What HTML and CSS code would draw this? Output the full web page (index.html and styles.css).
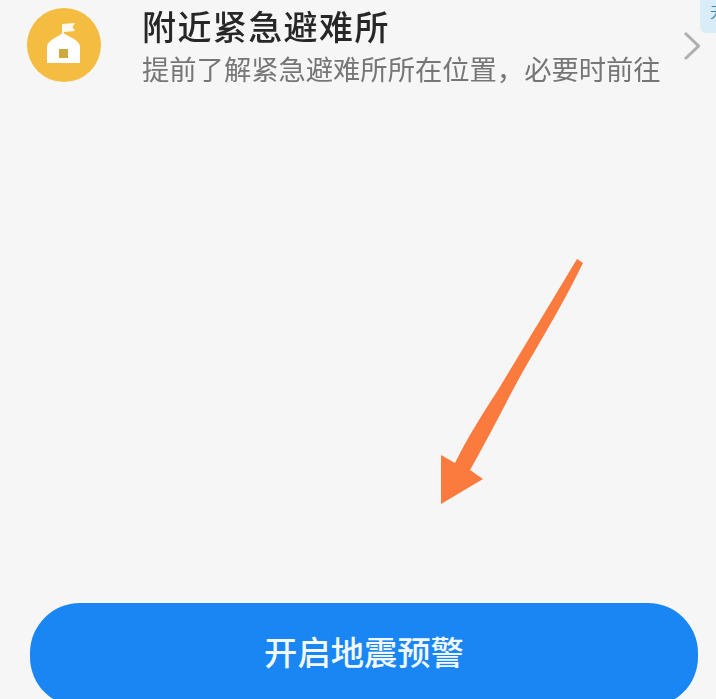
FILE: index.html
```html
<!DOCTYPE html>
<html lang="zh-CN">
<head>
<meta charset="utf-8">
<title>地震预警</title>
<link rel="stylesheet" href="styles.css">
</head>
<body>
<main class="screen">
  <section class="row">
    <svg class="badge" viewBox="0 0 74 74" aria-hidden="true">
      <circle cx="37" cy="37" r="37" fill="#f4bc41"/>
      <path d="M36 26L36 16" stroke="#fff" stroke-width="1.800" fill="none"/>
      <path d="M36 16L48 15L45.500 19L48 23L37 24Z" fill="#fff" opacity=".92"/>
      <path d="M20 55V39Q20.500 34 26 31L36 25L47 31Q52.500 34 53 39V55Z" fill="#fff"/>
      <rect x="32" y="41" width="9" height="9" fill="#cfa93f"/>
    </svg>
    <div class="copy">
      <h1 class="title">附近紧急避难所</h1>
      <p class="sub">提前了解紧急避难所所在位置，必要时前往</p>
    </div>
    <svg class="chev" viewBox="0 0 18 30" aria-hidden="true">
      <path d="M3 2L16.500 15L3 28" fill="none" stroke="#afafaf" stroke-width="3"/>
    </svg>
  </section>
  <div class="spacer"></div>
  <button class="cta">开启地震预警</button>
  <div class="tag">无</div>
  <svg class="arrow" viewBox="0 0 180 280" aria-hidden="true">
    <path d="M157 19L163 23C140 70 115 110 101 135C88 158 72 192 50 230L63 239L21 264V215L35 223C48 197 60 178 78 150L157 19Z" fill="#fb7a3e"/>
  </svg>
</main>
</body>
</html>
```
FILE: styles.css
```css
* { box-sizing: border-box; }
html, body { margin: 0; height: 100%; }
body { background: #f6f6f6; font-family: "Noto Sans CJK SC", "Liberation Sans", sans-serif; overflow: hidden; }
.screen { position: relative; width: 716px; height: 699px; display: flex; flex-direction: column; padding: 8px 16px 0 27px; overflow: hidden; filter: blur(.5px); }
.row { display: flex; align-items: flex-start; }
.badge { width: 74px; height: 74px; flex: none; margin-right: 41px; }
.copy { flex: 1; min-width: 0; margin-top: -5px; }
.title { margin: 0; font-size: 34px; line-height: 46px; font-weight: 500; letter-spacing: 1.400px; color: #272727; white-space: nowrap; }
.sub { margin: 0; font-size: 27.300px; line-height: 38px; font-weight: 400; color: #767676; white-space: nowrap; }
.chev { width: 18px; height: 30px; flex: none; margin-top: 23px; }
.spacer { flex: 1; }
.cta { flex: none; width: 668px; height: 104px; margin: 0 0 -8px 3px; border: 0; border-radius: 50px; background: #1a86f4; color: #f1f8fe; font: 500 33.300px/1 "Noto Sans CJK SC", sans-serif; padding: 0 0 8px; }
.tag { position: absolute; left: 700px; top: -8px; width: 40px; height: 41px; border-radius: 6px; background: #d8edf7; color: #3a86b8; font-size: 14px; padding: 9px 0 0 10px; }
.arrow { position: absolute; left: 420px; top: 240px; width: 180px; height: 280px; }
```
